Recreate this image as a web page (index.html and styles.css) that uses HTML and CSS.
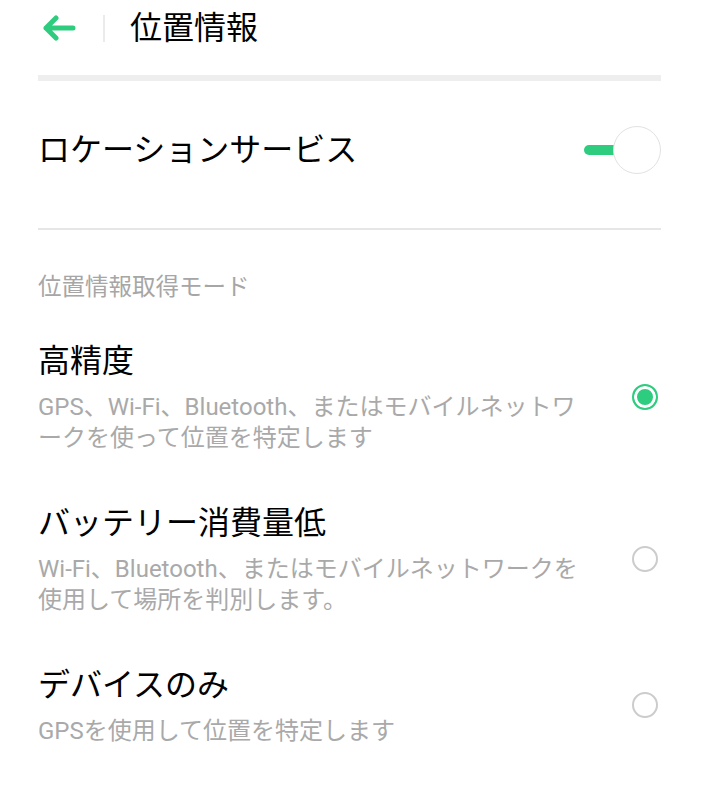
FILE: index.html
```html
<!DOCTYPE html>
<html lang="ja">

<head>
    <meta charset="UTF-8">
    <meta name="viewport" content="width=device-width, initial-scale=1.0">
    <title>位置情報</title>
    <link rel="stylesheet" href="styles.css">
</head>

<body>
    <div class="toolbar">
        <div class="back">
            <svg width="34" height="26" viewBox="0 0 34 26">
                <path d="M31 13H4M14 3L4 13L14 23" fill="none" stroke="#2ecc7f" stroke-width="5"
                    stroke-linecap="round" stroke-linejoin="round" />
            </svg>
        </div>
        <div class="toolbar-sep"></div>
        <h1 class="title">位置情報</h1>
    </div>

    <div class="content">
        <div class="thick-line"></div>

        <div class="switch-row">
            <div class="switch-label">ロケーションサービス</div>
            <div class="switch">
                <div class="switch-track"></div>
                <div class="switch-knob"></div>
            </div>
        </div>

        <div class="thin-line"></div>

        <div class="section-head">位置情報取得モード</div>

        <div class="option">
            <div class="option-text">
                <div class="option-title">高精度</div>
                <div class="option-desc">GPS、Wi-Fi、Bluetooth、またはモバイルネットワークを使って位置を特定します</div>
            </div>
            <div class="radio checked"></div>
        </div>

        <div class="option">
            <div class="option-text">
                <div class="option-title">バッテリー消費量低</div>
                <div class="option-desc">Wi-Fi、Bluetooth、またはモバイルネットワークを使用して場所を判別します。</div>
            </div>
            <div class="radio"></div>
        </div>

        <div class="option">
            <div class="option-text">
                <div class="option-title">デバイスのみ</div>
                <div class="option-desc">GPSを使用して位置を特定します</div>
            </div>
            <div class="radio"></div>
        </div>
    </div>
</body>

</html>
```

FILE: styles.css
```css
body {
    margin: 0;
    background-color: white;
    font-family: Roboto, "Noto Sans CJK JP", sans-serif;
    color: black;
}

.toolbar {
    display: flex;
    align-items: center;
    height: 56px;
    padding-left: 42px;
}

.back {
    display: flex;
    align-items: center;
    width: 34px;
    height: 26px;
}

.toolbar-sep {
    width: 2px;
    height: 27px;
    margin-left: 27px;
    background-color: #ebebeb;
}

.title {
    margin: 0 0 0 25px;
    font-size: 32px;
    font-weight: normal;
    line-height: 40px;
}

.content {
    padding: 19px 40px 0 38px;
}

.thick-line {
    height: 6px;
    background-color: #eeeeee;
}

.switch-row {
    display: flex;
    align-items: center;
    justify-content: space-between;
    padding: 45px 0 54px;
}

.switch-label {
    font-size: 32px;
    line-height: 40px;
}

.switch {
    position: relative;
    width: 77px;
    height: 48px;
}

.switch-track {
    position: absolute;
    left: 0;
    top: 19px;
    width: 34px;
    height: 10px;
    border-radius: 5px;
    background-color: #2ecc7f;
}

.switch-knob {
    position: absolute;
    right: 0;
    top: 0;
    width: 46px;
    height: 46px;
    border: 1px solid #e2e2e2;
    border-radius: 50%;
    background-color: white;
}

.thin-line {
    height: 2px;
    background-color: #e6e6e6;
}

.section-head {
    margin-top: 42px;
    font-size: 23.5px;
    line-height: 30px;
    color: #a6a6a6;
}

.option {
    display: flex;
    align-items: center;
    justify-content: space-between;
    padding-top: 37px;
    padding-bottom: 16px;
}

.option + .option {
    padding-top: 31px;
}

.option-text {
    width: 550px;
}

.option-title {
    font-size: 32px;
    line-height: 44px;
}

.option-desc {
    margin-top: 9px;
    font-size: 24px;
    line-height: 31px;
    color: #a9a9a9;
}

.radio {
    flex: none;
    width: 22px;
    height: 22px;
    margin-right: 3px;
    border: 2.5px solid #cccccc;
    border-radius: 50%;
}

.radio.checked {
    border-color: #2ecc7f;
    background-color: #2ecc7f;
    box-shadow: inset 0 0 0 3px white;
}
```
